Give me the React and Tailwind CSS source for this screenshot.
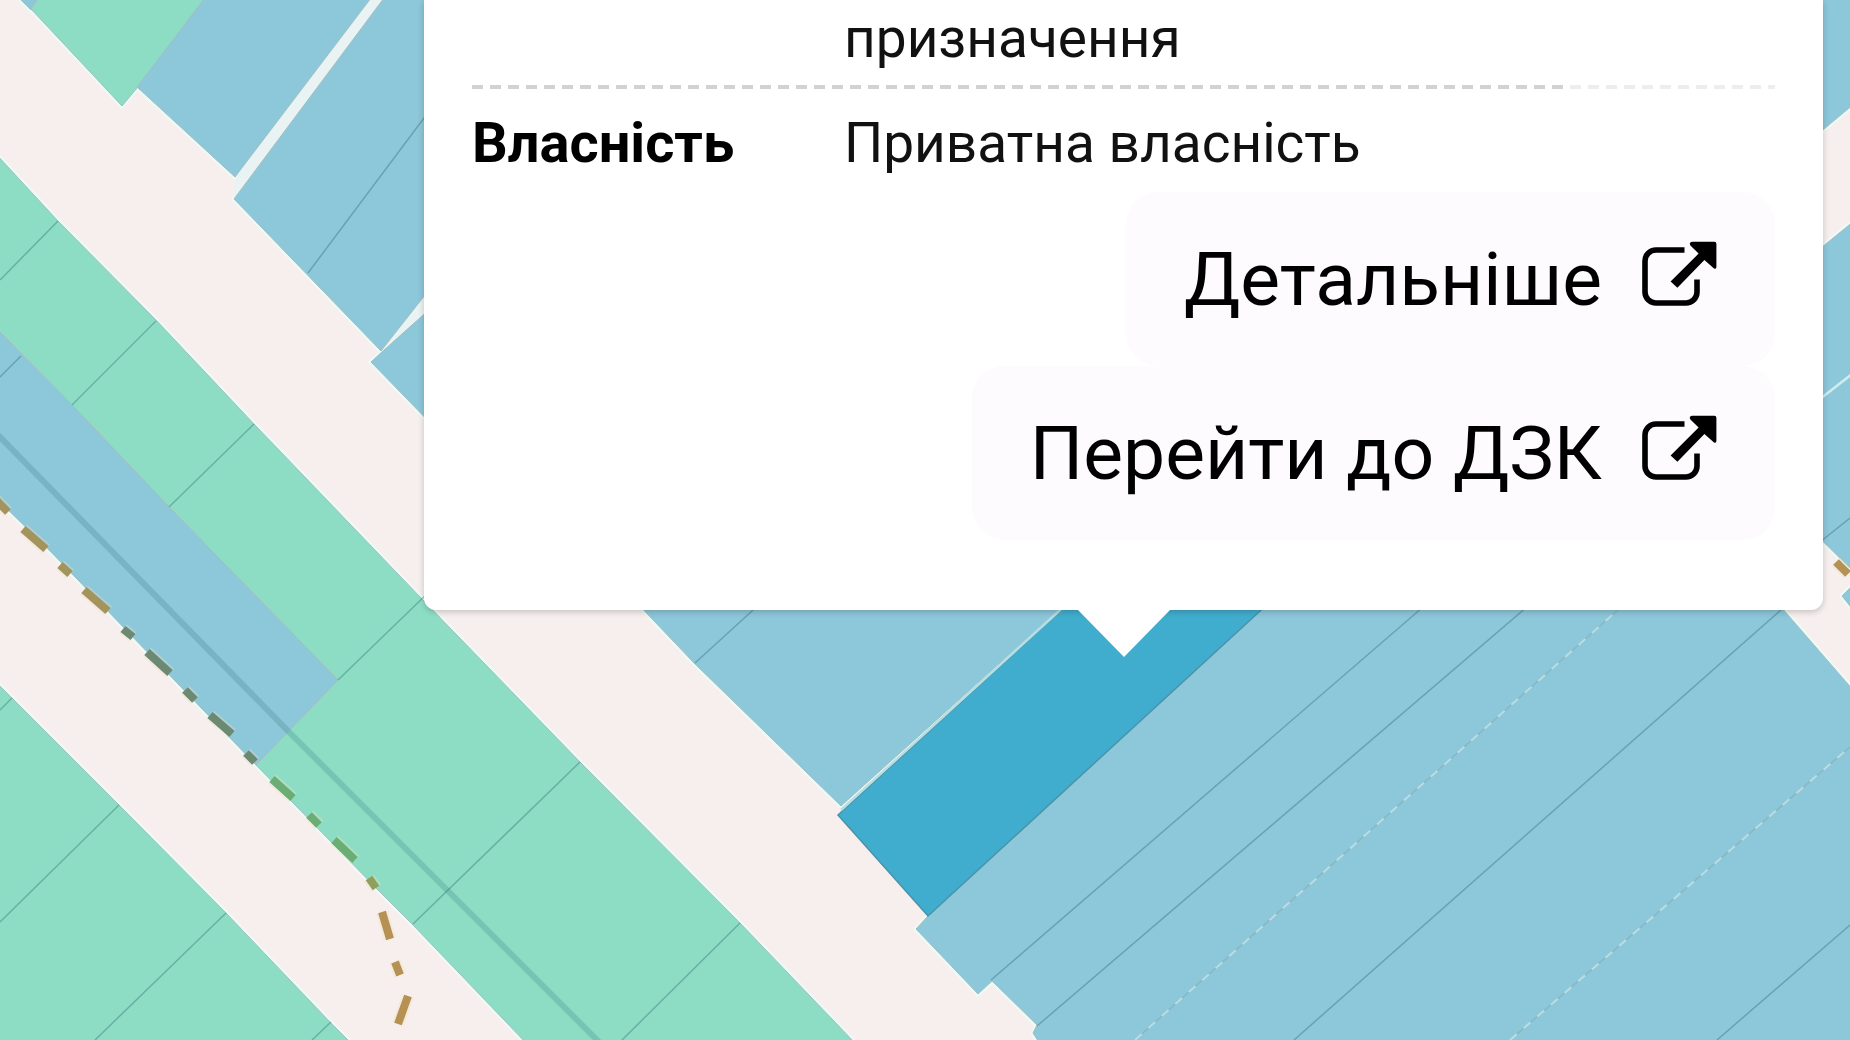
import React from "react";

const BLUE = "#8dc7da";
const GREEN = "#8dddc5";

// Parcels of the cadastral layer, in map units
const parcels = [
  { fill: BLUE, points: "19,-2 38,-2 31,10" },
  { fill: GREEN, points: "39,-2 31,9 122,106 137,88 205,-2" },
  { fill: BLUE, points: "205,-2 137,87 235,177 371,-2" },
  { fill: BLUE, points: "384,-2 440,-2 440,276 381,351 234,199" },
  { fill: BLUE, points: "371,362 384,350 440,300 440,433" },
  { fill: GREEN, points: "-4,154 58,221 156,320 254,424 422,599 580,762 740,923 856,1044 527,1044 413,925 378,890 256,765 338,680 169,507 72,405 -4,328" },
  { fill: BLUE, points: "-4,328 72,405 169,507 338,680 256,765 50,551 -4,498" },
  { fill: GREEN, points: "-4,682 119,805 226,913 330,1022 352,1044 -4,1044" },
  { fill: BLUE, points: "634,600 695,664 841,806 1070,600" },
  { fill: BLUE, points: "928,916 916,929 978,994 992,981 1037,1025 1033,1033 1040,1044 1854,1044 1854,691 1775,600 1272,600" },
  { fill: BLUE, points: "1800,-4 1854,-4 1854,104 1800,149" },
  { fill: BLUE, points: "1800,265 1854,221 1854,572 1800,519" },
  { fill: BLUE, points: "1842,596 1854,584 1854,611" },
];

const gaps = [
  "371,-2 384,-2 234,199 235,177",
  "440,276 440,300 383,350",
];

const borders = [
  [308, 273, 430, 110],
  [0, 280, 58, 221],
  [72, 405, 156, 321],
  [169, 507, 254, 424],
  [338, 680, 430, 591],
  [413, 924, 580, 762],
  [622, 1040, 740, 923],
  [0, 377, 21, 356],
  [0, 710, 12, 698],
  [0, 922, 119, 805],
  [95, 1040, 226, 913],
  [312, 1040, 331, 1022],
  [695, 663, 764, 600],
  [991, 980, 1430, 601],
  [1037, 1026, 1534, 601],
  [1294, 1040, 1791, 601],
  [1717, 1040, 1850, 925],
  [1820, 542, 1850, 518],
];

const paleBorders = [
  [1135, 1040, 1628, 601],
  [1510, 1040, 1850, 747],
];

// Footpath, coloured by what it crosses
const footpath = [
  { stroke: "#a3935c", d: "M-4 500 8 512M23 529 46 549M60 565 70 574M84 590 108 611" },
  { stroke: "#6c8974", d: "M123 629 133 637M147 652 170 673M185 690 195 700M210 715 232 734M246 753 255 762" },
  { stroke: "#6aae76", d: "M272 779 293 798M309 815 319 825M334 840 355 860" },
  { stroke: "#8f9f5c", d: "M369 878 376 888" },
  { stroke: "#b59253", d: "M382 912 390 939M395 962 400 975M408 996 398 1024M1836 562 1848 574" },
];

function CadastralMap() {
  return (
    <svg
      className="absolute inset-0 h-full w-full"
      viewBox="0 0 1850 1040"
      preserveAspectRatio="xMidYMid slice"
      aria-hidden="true"
    >
      <rect width="1850" height="1040" fill="#f6efee" />
      <g fill="none" stroke="#eefaf6" strokeWidth="5">
        {parcels.map((p) => (
          <polygon key={p.points} points={p.points} />
        ))}
      </g>
      {gaps.map((points) => (
        <polygon key={points} points={points} fill="#eaf3f3" />
      ))}
      <g stroke="#a3bfc0" strokeWidth="1">
        {parcels.map((p) => (
          <polygon key={p.points} points={p.points} fill={p.fill} />
        ))}
      </g>

      <g stroke="#1f5f63" strokeOpacity="0.35" strokeWidth="1.5">
        {borders.map(([x1, y1, x2, y2]) => (
          <line key={`${x1}-${y1}`} x1={x1} y1={y1} x2={x2} y2={y2} />
        ))}
      </g>
      {paleBorders.map(([x1, y1, x2, y2]) => (
        <g key={x1} strokeWidth="1.5">
          <line x1={x1} y1={y1} x2={x2} y2={y2} stroke="#86b0ba" strokeOpacity="0.7" />
          <line x1={x1} y1={y1} x2={x2} y2={y2} stroke="#b9dde3" strokeWidth="2" strokeDasharray="9 9" />
        </g>
      ))}
      <line x1="1820" y1="399" x2="1852" y2="374" stroke="#cfecee" strokeWidth="2.5" />

      {/* Road axis */}
      <path d="M-4 433 288 731 430 873 600 1043" fill="none" stroke="#1c6468" strokeOpacity="0.2" strokeWidth="6" />

      {/* Selected parcel */}
      <polygon points="838,815 1072,600 1272,600 928,916" fill="#41adce" stroke="#4a93a8" strokeWidth="1.5" />
      <line x1="841" y1="810" x2="1070" y2="601" stroke="#b4dfe5" strokeWidth="2.5" />

      {footpath.map((p) => (
        <g key={p.d} fill="none">
          <path d={p.d} stroke="#f2dfb8" strokeOpacity="0.35" strokeWidth="12" />
          <path d={p.d} stroke={p.stroke} strokeWidth="8" />
        </g>
      ))}
    </svg>
  );
}

function ExternalIcon() {
  return (
    <svg className="h-[76px] w-[75px] shrink-0" viewBox="0 0 75 76" aria-hidden="true">
      <path
        d="M42.5 9H14A11 11 0 0 0 3 20V51A11 11 0 0 0 14 62H44A11 11 0 0 0 55 51V38.5"
        fill="none"
        stroke="#000"
        strokeWidth="5.6"
      />
      <path
        d="M50 .8H72.5Q74.4 .8 74.4 2.7V26Q74.2 28.6 72 27.4L62.4 19 35.4 46.8 28.6 40.4 56.6 12.6 48.4 4.4Q46.6 1.4 50 .8Z"
        fill="#000"
      />
    </svg>
  );
}

function ActionButton({ children }) {
  return (
    <button
      type="button"
      className="flex h-[174px] items-center gap-10 rounded-[32px] bg-[#fdfbfe] px-[58px] text-[75px] text-black"
    >
      <span>{children}</span>
      <ExternalIcon />
    </button>
  );
}

export default function App() {
  return (
    <main className="relative h-screen w-full overflow-hidden font-[Roboto,sans-serif]">
      <CadastralMap />

      <section className="absolute top-0 right-[27px] left-[424px] rounded-b-xl bg-white px-12 pt-1.5 pb-[70px] shadow-[0_2px_6px_rgba(0,0,0,0.2)]">
        <table className="w-full border-collapse text-left text-[55px] leading-16 text-[#111]">
          <tbody>
            {/* dashed rule under the row, fading out at its right end */}
            <tr className="bg-[linear-gradient(90deg,transparent_84%,rgba(255,255,255,0.6)_84%),repeating-linear-gradient(90deg,#d2d2d2_0_11px,transparent_11px_18px)] bg-[length:100%_4px] bg-bottom bg-no-repeat">
              <td className="w-[372px] p-0" />
              <td className="p-0 pb-[19px]">призначення</td>
            </tr>
            <tr>
              <th scope="row" className="w-[372px] p-0 pt-[22px] pb-[17px] text-[56px] font-bold text-black">
                Власність
              </th>
              <td className="p-0 pt-[22px] pb-[17px]">Приватна власність</td>
            </tr>
          </tbody>
        </table>

        <div className="flex flex-col items-end">
          <ActionButton>Детальніше</ActionButton>
          <ActionButton>Перейти до ДЗК</ActionButton>
        </div>

        {/* Popup pointer */}
        <svg className="absolute top-full left-1/2 -mt-px h-12 w-[94px] -translate-x-1/2" viewBox="0 0 94 48" aria-hidden="true">
          <path d="M0 0H94L47 48Z" fill="#fff" />
        </svg>
      </section>
    </main>
  );
}
